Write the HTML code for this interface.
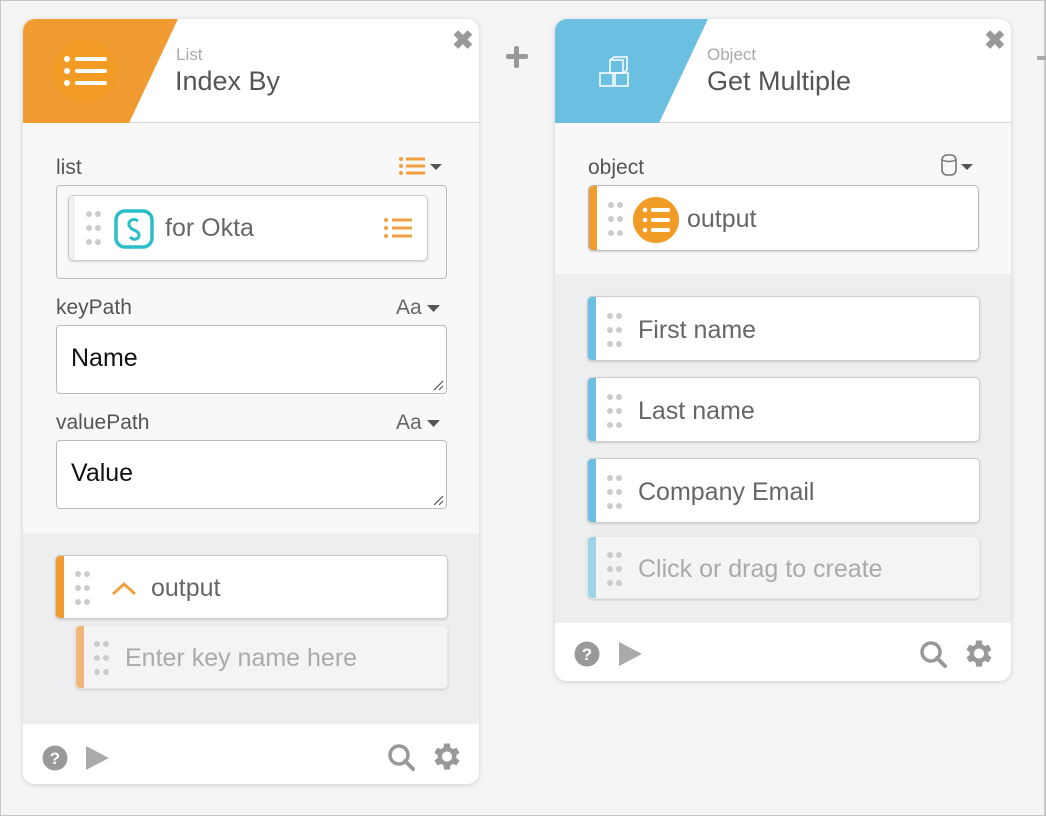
<!DOCTYPE html>
<html><head><meta charset="utf-8"><style>
*{box-sizing:border-box;margin:0;padding:0}
body{width:1046px;height:816px;background:#f5f5f5;font-family:"Liberation Sans",sans-serif;position:relative;overflow:hidden;border:1px solid #c8c8c8;border-right:2px solid #c8c8c8}
.a{position:absolute}
.card{position:absolute;background:#f8f8f8;border-radius:12px;box-shadow:0 1px 6px rgba(0,0,0,.15);overflow:hidden}
.hdr{position:absolute;left:0;top:0;right:0;height:104px;background:#fff;border-bottom:1px solid #d6d6d6}
.sub{position:absolute;font-size:17px;color:#aaa;font-weight:300}
.ttl{position:absolute;font-size:27px;color:#555}
.x{position:absolute;font-size:26px;color:#999;font-weight:bold}
.lbl{position:absolute;font-size:21px;color:#555}
.gray{position:absolute;left:0;right:0;background:#eceeef}
.foot{position:absolute;left:0;right:0;bottom:0;background:#fff}
.pill{position:absolute;background:#fff;border:1px solid #ccc;border-radius:5px;box-shadow:0 1px 2px rgba(0,0,0,.15);overflow:hidden}
.pill .bar{position:absolute;left:0;top:0;bottom:0;width:8px}
.pill .t{position:absolute;font-size:25px;color:#666;white-space:nowrap;margin-top:2px}
.dots{position:absolute;width:14px;height:34px}
.dots i{position:absolute;width:6px;height:6px;border-radius:50%;background:#ccc}
.inp{position:absolute;background:#fff;border:1px solid #bbb;border-radius:4px}
.inp span{position:absolute;left:14px;top:18px;font-size:25px;color:#111}
.inp svg{position:absolute;right:2px;bottom:2px}
</style></head><body>

<div class="a" style="left:505px;top:45px;width:22px;height:22px">
<div class="a" style="left:0;top:8px;width:22px;height:5px;background:#999;border-radius:2px"></div>
<div class="a" style="left:8px;top:0;width:5px;height:22px;background:#999;border-radius:2px"></div></div>
<div class="a" style="left:1036px;top:55px;width:10px;height:4px;background:#aaa"></div>

<!-- LEFT CARD -->
<div class="card" style="left:22px;top:18px;width:456px;height:765px">
 <div class="hdr"><svg class="a" style="left:0;top:0" width="160" height="104"><polygon points="0,0 155,0 106,104 0,104" fill="#f09c33"/>
  <circle cx="62" cy="52" r="32" fill="#f29b25"/>
  <g fill="#fff"><circle cx="44" cy="40" r="3"/><circle cx="44" cy="52" r="3"/><circle cx="44" cy="64" r="3"/>
  <rect x="52" y="38" width="32" height="4" rx="2"/><rect x="52" y="50" width="32" height="4" rx="2"/><rect x="52" y="62" width="32" height="4" rx="2"/></g></svg>
  <div class="sub" style="left:153px;top:26px">List</div>
  <div class="ttl" style="left:152px;top:47px">Index By</div>
  <div class="x" style="left:429px;top:6px">✖</div>
 </div>
 <div class="lbl" style="left:33px;top:137px">list</div>
 <svg class="a" style="left:374px;top:136px" width="48" height="24"><g fill="#f0a040"><circle cx="4" cy="4" r="2"/><circle cx="4" cy="11" r="2"/><circle cx="4" cy="18" r="2"/><rect x="9" y="2.5" width="19" height="3"/><rect x="9" y="9.5" width="19" height="3"/><rect x="9" y="16.5" width="19" height="3"/></g><polygon points="33,9 45,9 39,15" fill="#555"/></svg>
 <div class="a" style="left:33px;top:166px;width:391px;height:94px;border:1px solid #bbb;border-radius:4px;background:#f8f8f8"></div>
 <div class="pill" style="left:45px;top:176px;width:360px;height:66px;border-color:#ccc">
  <div class="bar" style="background:#f0f0f0;width:6px"></div>
  <div class="dots" style="left:17px;top:15px"><i style="left:0;top:0"></i><i style="left:9px;top:0"></i><i style="left:0;top:14px"></i><i style="left:9px;top:14px"></i><i style="left:0;top:28px"></i><i style="left:9px;top:28px"></i></div>
  <svg class="a" style="left:45px;top:13px" width="40" height="40"><rect x="2" y="2" width="36" height="36" rx="9" fill="none" stroke="#2bbec8" stroke-width="3.5"/><path d="M24 12 Q20 9 16 12 Q13 16 18 20 L22 22 Q27 25 24 29 Q20 32 16 28" fill="none" stroke="#2bbec8" stroke-width="3"/></svg>
  <div class="t" style="left:96px;top:16px">for Okta</div>
  <svg class="a" style="left:314px;top:20px" width="30" height="24"><g fill="#f0a040"><circle cx="3" cy="4" r="2"/><circle cx="3" cy="12" r="2"/><circle cx="3" cy="20" r="2"/><rect x="9" y="2.5" width="20" height="3"/><rect x="9" y="10.5" width="20" height="3"/><rect x="9" y="18.5" width="20" height="3"/></g></svg>
 </div>
 <div class="lbl" style="left:33px;top:277px">keyPath</div>
 <div class="lbl" style="left:373px;top:277px;color:#666">Aa</div>
 <svg class="a" style="left:404px;top:286px" width="14" height="8"><polygon points="0,0 13,0 6.5,7" fill="#555"/></svg>
 <div class="inp" style="left:33px;top:306px;width:391px;height:69px"><span>Name</span><svg width="12" height="12"><path d="M11 2L2 11M11 7L7 11" stroke="#555" stroke-width="1.2"/></svg></div>
 <div class="lbl" style="left:33px;top:392px">valuePath</div>
 <div class="lbl" style="left:373px;top:392px;color:#666">Aa</div>
 <svg class="a" style="left:404px;top:401px" width="14" height="8"><polygon points="0,0 13,0 6.5,7" fill="#555"/></svg>
 <div class="inp" style="left:33px;top:421px;width:391px;height:69px"><span>Value</span><svg width="12" height="12"><path d="M11 2L2 11M11 7L7 11" stroke="#555" stroke-width="1.2"/></svg></div>
 <div class="gray" style="top:514px;height:191px"></div>
 <div class="pill" style="left:32px;top:536px;width:393px;height:64px">
  <div class="bar" style="background:#f09c33"></div>
  <div class="dots" style="left:19px;top:15px"><i style="left:0;top:0"></i><i style="left:9px;top:0"></i><i style="left:0;top:14px"></i><i style="left:9px;top:14px"></i><i style="left:0;top:28px"></i><i style="left:9px;top:28px"></i></div>
  <svg class="a" style="left:55px;top:25px" width="26" height="16"><polyline points="2,13 13,3 24,13" fill="none" stroke="#f0a040" stroke-width="3"/></svg>
  <div class="t" style="left:95px;top:16px">output</div>
 </div>
 <div class="pill" style="left:52px;top:606px;width:373px;height:64px;background:#f4f4f4;border-color:#e8e8e8">
  <div class="bar" style="background:#efb779"></div>
  <div class="dots" style="left:18px;top:15px"><i style="left:0;top:0"></i><i style="left:9px;top:0"></i><i style="left:0;top:14px"></i><i style="left:9px;top:14px"></i><i style="left:0;top:28px"></i><i style="left:9px;top:28px"></i></div>
  <div class="t" style="left:49px;top:16px;color:#aaa">Enter key name here</div>
 </div>
 <div class="foot" style="height:60px">
  <svg class="a" style="left:19px;top:21px" width="90" height="28"><circle cx="13" cy="13" r="12.5" fill="#999"/><text x="13" y="19" font-size="17" font-weight="bold" fill="#fff" text-anchor="middle" font-family="Liberation Sans">?</text><polygon points="44,1 67,13 44,25" fill="#aaa"/></svg>
  <svg class="a" style="left:364px;top:19px" width="30" height="30"><circle cx="12" cy="12" r="9" fill="none" stroke="#999" stroke-width="3.5"/><line x1="18" y1="18" x2="26" y2="26" stroke="#999" stroke-width="4" stroke-linecap="round"/></svg>
  <svg class="a" style="left:408px;top:18px" width="32" height="32" viewBox="2 2 22 22"><path fill="#999" d="M19.4 13a7.5 7.5 0 000-2l2.1-1.6-2-3.5-2.5 1a7.5 7.5 0 00-1.7-1L15 3h-4l-.4 2.9a7.5 7.5 0 00-1.7 1l-2.5-1-2 3.5L6.6 11a7.5 7.5 0 000 2l-2.2 1.6 2 3.5 2.5-1a7.5 7.5 0 001.7 1L11 21h4l.4-2.9a7.5 7.5 0 001.7-1l2.5 1 2-3.5zM13 15.5a3.5 3.5 0 110-7 3.5 3.5 0 010 7z"/></svg>
 </div>
</div>

<!-- RIGHT CARD -->
<div class="card" style="left:554px;top:18px;width:456px;height:662px">
 <div class="hdr"><svg class="a" style="left:0;top:0" width="160" height="104"><polygon points="0,0 153,0 104,104 0,104" fill="#6bc0e2"/>
  <g fill="none" stroke="#fff" stroke-width="1.5"><rect x="55" y="41" width="13" height="13"/><rect x="45" y="54" width="13" height="13"/><rect x="60" y="54" width="13" height="13"/><path d="M55 41l4-3h13v13l-4 3M72 38v0"/></g></svg>
  <div class="sub" style="left:152px;top:26px">Object</div>
  <div class="ttl" style="left:152px;top:47px">Get Multiple</div>
  <div class="x" style="left:429px;top:6px">✖</div>
 </div>
 <div class="lbl" style="left:33px;top:137px">object</div>
 <svg class="a" style="left:386px;top:135px" width="36" height="26"><rect x="1" y="1" width="14" height="20" rx="5" fill="none" stroke="#777" stroke-width="1.6"/><path d="M1 6q7 3 14 0" fill="none" stroke="#777" stroke-width="1.4"/><polygon points="20,10 32,10 26,16" fill="#555"/></svg>
 <div class="pill" style="left:33px;top:166px;width:391px;height:66px;border-color:#bbb">
  <div class="bar" style="background:#f09c33"></div>
  <div class="dots" style="left:19px;top:16px"><i style="left:0;top:0"></i><i style="left:9px;top:0"></i><i style="left:0;top:14px"></i><i style="left:9px;top:14px"></i><i style="left:0;top:28px"></i><i style="left:9px;top:28px"></i></div>
  <svg class="a" style="left:43px;top:10px" width="48" height="48"><circle cx="24" cy="24" r="23" fill="#f09c25"/><g fill="#fff"><circle cx="13" cy="14" r="2.3"/><circle cx="13" cy="24" r="2.3"/><circle cx="13" cy="34" r="2.3"/><rect x="19" y="12" width="19" height="4" rx="2"/><rect x="19" y="22" width="19" height="4" rx="2"/><rect x="19" y="32" width="19" height="4" rx="2"/></g></svg>
  <div class="t" style="left:98px;top:17px">output</div>
 </div>
 <div class="gray" style="top:255px;height:349px"></div>
 <div class="pill" style="left:32px;top:277px;width:393px;height:65px">
  <div class="bar" style="background:#6bc0e2"></div>
  <div class="dots" style="left:19px;top:16px"><i style="left:0;top:0"></i><i style="left:9px;top:0"></i><i style="left:0;top:14px"></i><i style="left:9px;top:14px"></i><i style="left:0;top:28px"></i><i style="left:9px;top:28px"></i></div>
  <div class="t" style="left:50px;top:17px">First name</div></div>
 <div class="pill" style="left:32px;top:358px;width:393px;height:65px">
  <div class="bar" style="background:#6bc0e2"></div>
  <div class="dots" style="left:19px;top:16px"><i style="left:0;top:0"></i><i style="left:9px;top:0"></i><i style="left:0;top:14px"></i><i style="left:9px;top:14px"></i><i style="left:0;top:28px"></i><i style="left:9px;top:28px"></i></div>
  <div class="t" style="left:50px;top:17px">Last name</div></div>
 <div class="pill" style="left:32px;top:439px;width:393px;height:65px">
  <div class="bar" style="background:#6bc0e2"></div>
  <div class="dots" style="left:19px;top:16px"><i style="left:0;top:0"></i><i style="left:9px;top:0"></i><i style="left:0;top:14px"></i><i style="left:9px;top:14px"></i><i style="left:0;top:28px"></i><i style="left:9px;top:28px"></i></div>
  <div class="t" style="left:50px;top:17px">Company Email</div></div>
 <div class="pill" style="left:32px;top:517px;width:393px;height:63px;background:#f4f4f4;border-color:#e8e8e8">
  <div class="bar" style="background:#9ed2e6"></div>
  <div class="dots" style="left:19px;top:15px"><i style="left:0;top:0"></i><i style="left:9px;top:0"></i><i style="left:0;top:14px"></i><i style="left:9px;top:14px"></i><i style="left:0;top:28px"></i><i style="left:9px;top:28px"></i></div>
  <div class="t" style="left:50px;top:16px;color:#aaa">Click or drag to create</div></div>
 <div class="foot" style="height:58px">
  <svg class="a" style="left:19px;top:18px" width="90" height="28"><circle cx="13" cy="13" r="12.5" fill="#999"/><text x="13" y="19" font-size="17" font-weight="bold" fill="#fff" text-anchor="middle" font-family="Liberation Sans">?</text><polygon points="45,1 68,13 45,25" fill="#aaa"/></svg>
  <svg class="a" style="left:364px;top:17px" width="30" height="30"><circle cx="12" cy="12" r="9" fill="none" stroke="#999" stroke-width="3.5"/><line x1="18" y1="18" x2="26" y2="26" stroke="#999" stroke-width="4" stroke-linecap="round"/></svg>
  <svg class="a" style="left:408px;top:16px" width="32" height="32" viewBox="2 2 22 22"><path fill="#999" d="M19.4 13a7.5 7.5 0 000-2l2.1-1.6-2-3.5-2.5 1a7.5 7.5 0 00-1.7-1L15 3h-4l-.4 2.9a7.5 7.5 0 00-1.7 1l-2.5-1-2 3.5L6.6 11a7.5 7.5 0 000 2l-2.2 1.6 2 3.5 2.5-1a7.5 7.5 0 001.7 1L11 21h4l.4-2.9a7.5 7.5 0 001.7-1l2.5 1 2-3.5zM13 15.5a3.5 3.5 0 110-7 3.5 3.5 0 010 7z"/></svg>
 </div>
</div>
</body></html>
